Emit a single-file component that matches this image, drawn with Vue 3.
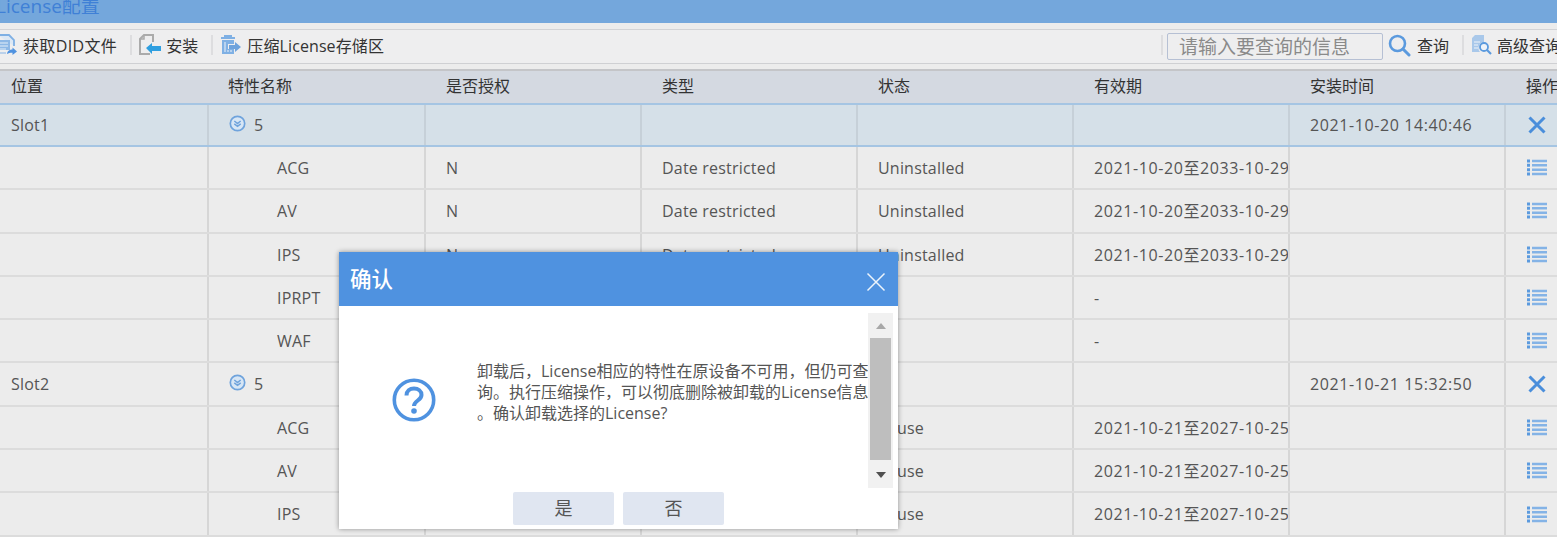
<script setup>
const cols = ['位置', '特性名称', '是否授权', '类型', '状态', '有效期', '安装时间', '操作']
const rows = [
  { slot: 'Slot1', time: '2021-10-20 14:40:46', active: true },
  { name: 'ACG', auth: 'N', type: 'Date restricted', state: 'Uninstalled', valid: '2021-10-20至2033-10-29' },
  { name: 'AV', auth: 'N', type: 'Date restricted', state: 'Uninstalled', valid: '2021-10-20至2033-10-29' },
  { name: 'IPS', auth: 'N', type: 'Date restricted', state: 'Uninstalled', valid: '2021-10-20至2033-10-29' },
  { name: 'IPRPT', auth: '', type: '', state: '', valid: '-' },
  { name: 'WAF', auth: '', type: '', state: '', valid: '-' },
  { slot: 'Slot2', time: '2021-10-21 15:32:50' },
  { name: 'ACG', auth: '', type: '', state: 'In use', valid: '2021-10-21至2027-10-25' },
  { name: 'AV', auth: '', type: '', state: 'In use', valid: '2021-10-21至2027-10-25' },
  { name: 'IPS', auth: '', type: '', state: 'In use', valid: '2021-10-21至2027-10-25' }
]
</script>

<template>
  <div class="page">
    <div class="titlebar"><span class="title">License配置</span></div>
    <div class="toolbar">
      <div class="tool first">
        <svg width="20" height="21" viewBox="0 0 20 21"><path d="M1 1h11l5 5v6" fill="#dce8f5" stroke="#7fb0e4" stroke-width="1.800"/><rect x="0" y="6" width="13" height="10" fill="#8db8e6"/><path d="M2 9h9M2 12h9M3 15h6" stroke="#e4edf7" stroke-width="1.200"/><path d="M2 16v3h7" fill="none" stroke="#a9c8ea" stroke-width="1.500"/><path d="M10 20c.5-3.500 3-4.500 5.500-4.500V13.500l4.500 4-4.500 3.500v-2.300c-2.500 0-4 .3-5.500 1.300z" fill="#4f92e0"/></svg>
        <span>获取DID文件</span>
      </div>
      <i class="sep"></i>
      <div class="tool install">
        <svg width="22" height="21" viewBox="0 0 22 21"><path d="M1 9V5l4-4h9v7" fill="none" stroke="#ababab" stroke-width="2"/><path d="M5 1v4H1" fill="none" stroke="#ababab" stroke-width="1.500"/><path d="M1 9v11h10" fill="none" stroke="#ababab" stroke-width="2"/><path d="M7 14l6-5v3h9v5h-9v3z" fill="#2f9fe0"/></svg>
        <span>安装</span>
      </div>
      <i class="sep"></i>
      <div class="tool">
        <svg width="21" height="21" viewBox="0 0 21 21"><path d="M4 1h8v2h3v2H1V3h3z" fill="#7fb0e4"/><path d="M2 6h12v4H8v5h6v5H2z" fill="#7fb0e4"/><path d="M5 8v10M8 16v2M11 16v2" stroke="#d5e4f4" stroke-width="1.300"/><path d="M9 11h6V8l6 5-6 5v-3H9z" fill="#6fa3dc"/></svg>
        <span>压缩License存储区</span>
      </div>
      <div class="tool-right">
        <i class="sep"></i>
        <div class="search">请输入要查询的信息</div>
        <svg class="query-icon" width="24" height="24" viewBox="0 0 24 24"><circle cx="10.500" cy="10.500" r="7.500" fill="none" stroke="#5b9ade" stroke-width="2.600"/><path d="M16 16l6 6" stroke="#5b9ade" stroke-width="3" stroke-linecap="round"/></svg>
        <span class="query-text">查询</span>
        <i class="sep"></i>
        <svg class="adv-icon" width="21" height="21" viewBox="0 0 21 21"><path d="M1 4l3-3h9v7a6 6 0 0 0-4 10H1z" fill="#a9c8ea"/><path d="M3 8h6M3 11h4M3 14h4" stroke="#f0f4f9" stroke-width="1.200"/><circle cx="13" cy="13" r="4" fill="#eef3f9" stroke="#5b9ade" stroke-width="1.800"/><path d="M16 16l4 4" stroke="#5b9ade" stroke-width="2.200"/></svg>
        <span class="adv-text">高级查询</span>
      </div>
    </div>

    <div class="grid head">
      <div v-for="c in cols" :key="c" class="hcell">{{ c }}</div>
    </div>

    <div
      v-for="(r, i) in rows"
      :key="i"
      class="grid row"
      :class="{ group: r.slot, active: r.active }"
    >
      <div class="cell">{{ r.slot }}</div>
      <div class="cell" :class="{ feature: !r.slot }">
        <template v-if="r.slot">
          <svg class="chev" width="17" height="17" viewBox="0 0 17 17"><circle cx="8.500" cy="8.500" r="7.200" fill="#d7e6f5" stroke="#6fa3dc" stroke-width="1.700"/><path d="M5.300 6l3.200 2.600L11.700 6M5.300 8.800l3.200 2.600 3.200-2.600" fill="none" stroke="#6fa3dc" stroke-width="1.500"/></svg>
          <span class="count">5</span>
        </template>
        <template v-else>{{ r.name }}</template>
      </div>
      <div class="cell">{{ r.auth }}</div>
      <div class="cell">{{ r.type }}</div>
      <div class="cell">{{ r.state }}</div>
      <div class="cell num">{{ r.valid }}</div>
      <div class="cell num">{{ r.time }}</div>
      <div class="cell op">
        <svg v-if="r.slot" width="20" height="20" viewBox="0 0 20 20"><path d="M2.500 2.500l15 15M17.500 2.500l-15 15" stroke="#4a8edb" stroke-width="3"/></svg>
        <svg v-else width="20" height="17" viewBox="0 0 20 17"><path d="M0 2h3M0 6.300h3M0 10.700h3M0 15h3" stroke="#5b9ade" stroke-width="3"/><path d="M5 2h15M5 6.300h15M5 10.700h15M5 15h15" stroke="#84b3e6" stroke-width="2.400"/></svg>
      </div>
    </div>

    <div class="modal">
      <div class="modal-head">
        <span class="modal-title">确认</span>
        <svg width="20" height="20" viewBox="0 0 20 20"><path d="M1.500 1.500l17 17M18.500 1.500l-17 17" stroke="#fff" stroke-width="1.500" opacity=".9"/></svg>
      </div>
      <div class="modal-body">
        <div class="q-icon">
          <svg width="44" height="44" viewBox="0 0 44 44"><circle cx="22" cy="22" r="19.700" fill="none" stroke="#4f92e0" stroke-width="3.600"/><path d="M14.500 17.500c0-4.500 3.300-7 7.500-7s7.500 2.500 7.500 6.500c0 5.500-7.500 5.500-7.500 11" fill="none" stroke="#4f92e0" stroke-width="4"/><circle cx="22" cy="33" r="2.800" fill="#4f92e0"/></svg>
        </div>
        <div class="msg">
          <div>卸载后，License相应的特性在原设备不可用，但仍可查</div>
          <div>询。执行压缩操作，可以彻底删除被卸载的License信息</div>
          <div>。确认卸载选择的License?</div>
        </div>
        <div class="scroll">
          <i class="arrow up"></i>
          <div class="thumb"></div>
          <i class="arrow down"></i>
        </div>
      </div>
      <div class="modal-foot">
        <div class="btn">是</div>
        <div class="btn">否</div>
      </div>
    </div>
  </div>
</template>

<style scoped>
.page {
  position: relative;
  width: 1557px;
  height: 537px;
  overflow: hidden;
  background: #ececec;
  color: #555;
  font-family: "Open Sans", "Noto Sans CJK SC", sans-serif;
  font-size: 16px;
}
.titlebar {
  height: 23px;
  background: #74a7dc;
  overflow: hidden;
}
.title {
  display: block;
  margin: -6px 0 0 -4px;
  line-height: 24px;
  font-size: 19px;
  color: #3f80d6;
}
.toolbar {
  display: flex;
  align-items: center;
  box-sizing: border-box;
  height: 35px;
  margin-top: 6px;
  padding-bottom: 4px;
  border-top: 1px solid #d2d3d6;
  border-bottom: 1px solid #cfd0d3;
  background: #eeeeef;
  color: #333;
  font-size: 16px;
  white-space: nowrap;
}
.tool {
  display: flex;
  align-items: center;
  gap: 6px;
  letter-spacing: .1px;
}
.tool.first {
  margin-left: -3px;
  letter-spacing: .35px;
}
.tool.install {
  gap: 5px;
}
.sep {
  display: block;
  width: 2px;
  height: 20px;
  margin: 0 7px 0 13px;
  background: #dddddf;
}
.tool-right {
  display: flex;
  align-items: center;
  margin-left: auto;
  margin-right: -4px;
}
.tool-right > .sep {
  margin: 0 4px 0 0;
}
.search {
  box-sizing: border-box;
  width: 216px;
  height: 27px;
  margin-top: 4px;
  padding-left: 11px;
  border: 1px solid #b6c0d4;
  border-radius: 2px;
  color: #8a8a8a;
  font-size: 19px;
  line-height: 26px;
}
.query-icon {
  margin-left: 4px;
}
.query-text {
  margin-left: 6px;
}
.tool-right .query-text + .sep {
  margin: 0 7px 0 13px;
}
.adv-text {
  margin-left: 5px;
}
.grid {
  display: grid;
  grid-template-columns: 207px 217px 216px 216px 216px 216px 216px 53px;
}
.head {
  box-sizing: border-box;
  height: 35px;
  margin-top: 5px;
  border-top: 2px solid #c4c5c8;
  background: #d4d9e1;
  color: #333;
  font-size: 16px;
  line-height: 30px;
}
.hcell {
  padding-left: 11px;
  white-space: nowrap;
}
.hcell:nth-child(2) {
  padding-left: 21px;
}
.hcell:nth-child(n+3) {
  padding-left: 22px;
}
.row {
  box-sizing: border-box;
  height: 43.300px;
  border-bottom: 2px solid #dcdcdc;
  line-height: 43px;
}
.row.active {
  height: 44px;
  margin-top: -1px;
  border-top: 2px solid #a5c5e3;
  border-bottom: 2px solid #a5c5e3;
  background: #d5e0e8;
  line-height: 40px;
}
.cell {
  box-sizing: border-box;
  min-width: 0;
  padding-left: 20px;
  overflow: hidden;
  border-left: 2px solid #d6d6d6;
  letter-spacing: .2px;
  white-space: nowrap;
}
.cell.num {
  letter-spacing: .6px;
}
.active .cell {
  border-left-color: #c6d0d8;
}
.cell:first-child {
  padding-left: 11px;
  border-left: 0;
}
.cell.feature {
  padding-left: 68px;
}
.cell.op {
  display: flex;
  align-items: center;
  padding-left: 21px;
  overflow: visible;
}
.chev {
  position: relative;
  top: 0;
  vertical-align: -1px;
  margin-right: 8px;
}
.count {
  font-size: 16px;
}
.modal {
  position: absolute;
  left: 339px;
  top: 252px;
  display: flex;
  flex-direction: column;
  width: 559px;
  height: 277px;
  background: #fff;
  box-shadow: 0 0 5px rgba(0, 0, 0, .4);
}
.modal-head {
  display: flex;
  align-items: center;
  justify-content: space-between;
  flex: none;
  height: 54px;
  padding: 0 12px 0 11px;
  background: #4f92e0;
  color: #fff;
}
.modal-title {
  margin-top: -4px;
  font-size: 21.500px;
  font-weight: 500;
}
.modal-head svg {
  margin-top: 5px;
}
.modal-body {
  display: flex;
  flex: 1;
  min-height: 0;
  padding: 7px 5px 0 0;
}
.q-icon {
  flex: none;
  width: 138px;
  padding: 65px 0 0 53px;
  box-sizing: border-box;
}
.msg {
  flex: none;
  width: 391px;
  padding-top: 48px;
  overflow: hidden;
  color: #555;
  font-size: 16px;
  line-height: 21px;
  white-space: nowrap;
}
.scroll {
  flex: none;
  position: relative;
  display: flex;
  flex-direction: column;
  align-items: center;
  width: 25px;
  height: 175px;
  background: #f1f1f1;
}
.thumb {
  width: 21px;
  height: 122px;
  background: #bebebe;
}
.arrow {
  display: block;
  width: 0;
  height: 0;
  border-left: 5.500px solid transparent;
  border-right: 5.500px solid transparent;
}
.arrow.up {
  margin: 10px 0 9px;
  border-bottom: 6px solid #a8a8a8;
}
.arrow.down {
  margin: 12px 0 0;
  border-top: 6px solid #505050;
}
.modal-foot {
  display: flex;
  flex: none;
  justify-content: center;
  gap: 9px;
  padding: 0 0 4px 0;
}
.btn {
  width: 101px;
  height: 33px;
  border-radius: 2px;
  background: #e0e6f1;
  color: #555;
  font-size: 18px;
  line-height: 33px;
  text-align: center;
}
</style>

<style>
html, body {
  margin: 0;
  overflow: hidden;
}
</style>
